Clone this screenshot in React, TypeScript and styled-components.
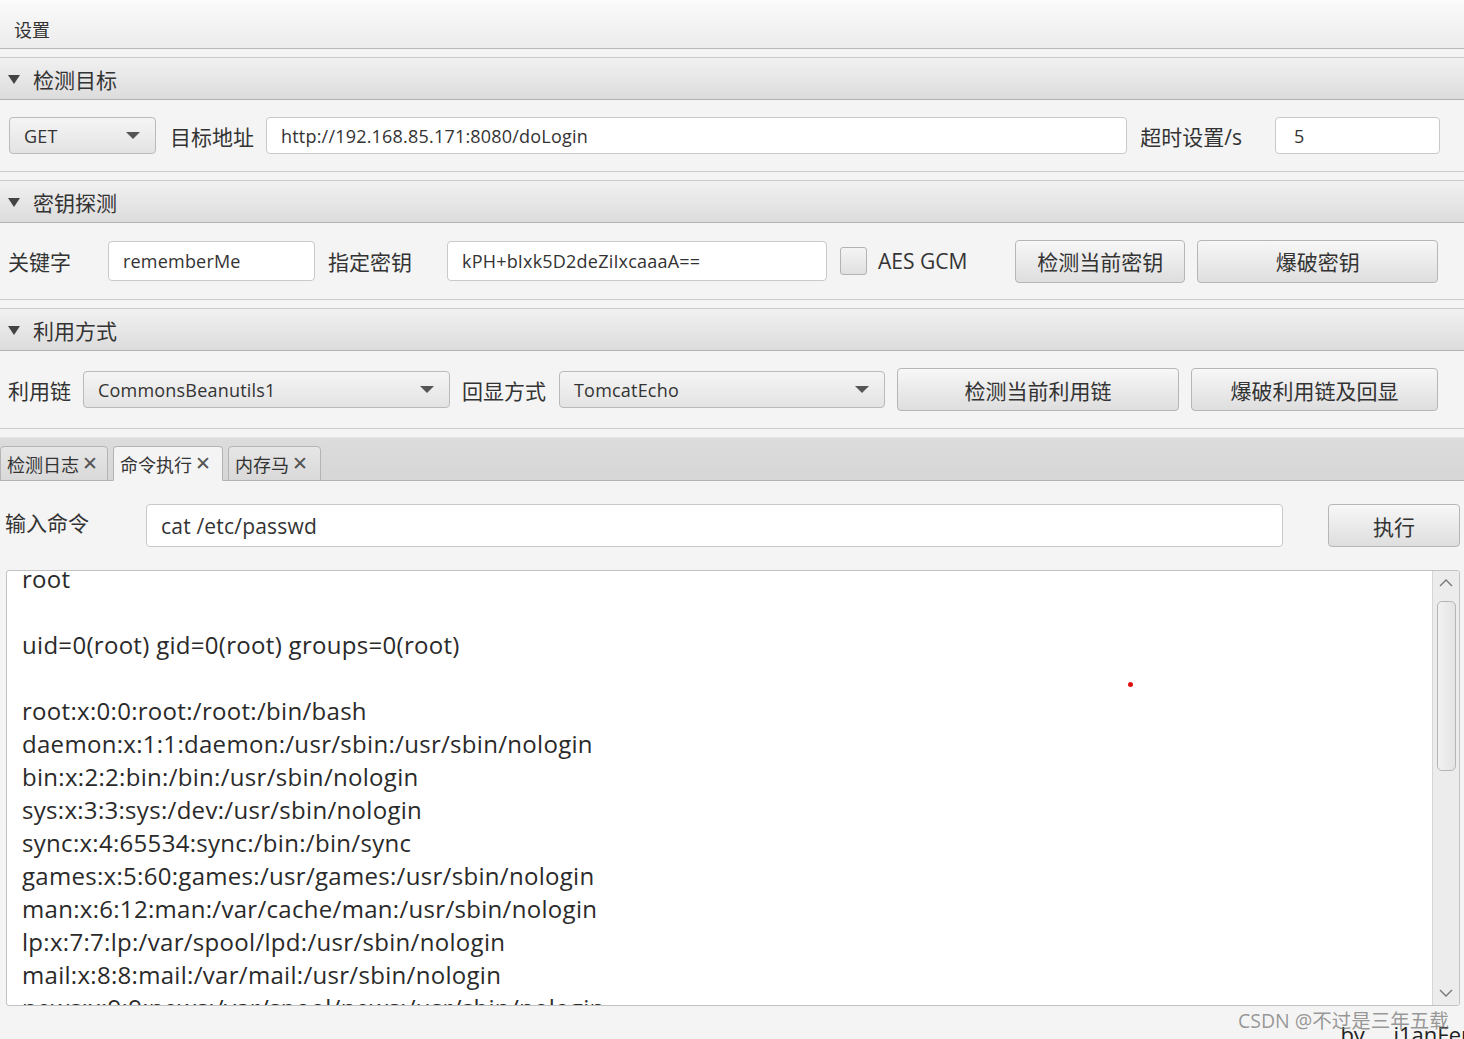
import React from 'react';
import styled, { createGlobalStyle } from 'styled-components';

const GlobalStyle = createGlobalStyle`
  html, body { margin: 0; padding: 0; background: #f4f4f4; }
  body { font-family: "Open Sans", "Noto Sans CJK SC", sans-serif; color: #333; }
  * { box-sizing: border-box; }
`;

const FONT = `"Open Sans", "Noto Sans CJK SC", sans-serif`;

const Window = styled.div`
  position: relative;
  width: 1464px;
  height: 1039px;
  overflow: hidden;
  background: #f4f4f4;
  border-top: 4px solid #fbfbfb;
  display: flex;
  flex-direction: column;
`;

const MenuBar = styled.div`
  height: 45px;
  display: flex;
  align-items: center;
  padding: 6px 0 0 14px;
  font-size: 18px;
  color: #333;
  background: linear-gradient(#f9f9f9, #ececec);
  border-bottom: 1px solid #b9b9b9;
`;

const Sections = styled.div`
  display: flex;
  flex-direction: column;
  gap: 8px;
  padding-top: 8px;
`;

const Pane = styled.section`
  display: flex;
  flex-direction: column;
`;

const PaneHeader = styled.div`
  height: 43px;
  display: flex;
  align-items: center;
  gap: 13px;
  padding-left: 8px;
  font-size: 21px;
  color: #333;
  background: linear-gradient(#f1f1f1, #dcdcdc);
  border-top: 1px solid #cacaca;
  border-bottom: 1px solid #b1b1b1;
`;

const Triangle = styled.span`
  width: 0;
  height: 0;
  border-left: 6px solid transparent;
  border-right: 6px solid transparent;
  border-top: 9px solid #444;
  margin-top: 2px;
`;

const PaneBody = styled.div<{ $h: number }>`
  height: ${(p) => p.$h}px;
  display: flex;
  align-items: center;
  padding-left: 8px;
  border-bottom: 1px solid #cbcbcb;
  background: #f4f4f4;
`;

const Label = styled.span<{ $ml?: number; $size?: number }>`
  margin-left: ${(p) => p.$ml ?? 0}px;
  font-size: ${(p) => p.$size ?? 21}px;
  color: #333;
  white-space: nowrap;
`;

const Field = styled.div<{ $w?: number; $h: number; $ml?: number; $size?: number; $pl?: number }>`
  ${(p) => (p.$w ? `width: ${p.$w}px; flex: none;` : 'flex: 1;')}
  height: ${(p) => p.$h}px;
  margin-left: ${(p) => p.$ml ?? 0}px;
  display: flex;
  align-items: center;
  padding-left: ${(p) => p.$pl ?? 14}px;
  background: #fff;
  border: 1px solid #c9c9c9;
  border-radius: 4px;
  font-size: ${(p) => p.$size ?? 18}px;
  letter-spacing: 0.2px;
  color: #333;
  white-space: nowrap;
  overflow: hidden;
`;

const Combo = styled.div<{ $w: number; $ml?: number }>`
  width: ${(p) => p.$w}px;
  flex: none;
  height: 37px;
  margin-left: ${(p) => p.$ml ?? 0}px;
  display: flex;
  align-items: center;
  justify-content: space-between;
  padding: 0 15px 0 14px;
  background: linear-gradient(#f5f5f5, #e3e3e3);
  border: 1px solid #bababa;
  border-radius: 4px;
  font-size: 18px;
  letter-spacing: 0.2px;
  color: #333;
`;

const ComboArrow = styled.span`
  width: 0;
  height: 0;
  border-left: 7px solid transparent;
  border-right: 7px solid transparent;
  border-top: 7px solid #555;
`;

const Button = styled.div<{ $w: number; $h?: number; $ml?: number }>`
  width: ${(p) => p.$w}px;
  flex: none;
  height: ${(p) => p.$h ?? 43}px;
  margin-left: ${(p) => p.$ml ?? 0}px;
  display: flex;
  align-items: center;
  justify-content: center;
  background: linear-gradient(#f7f7f7, #dedede);
  border: 1px solid #b6b6b6;
  border-radius: 4px;
  font-size: 21px;
  color: #333;
`;

const CheckBox = styled.div<{ $ml?: number }>`
  width: 27px;
  height: 28px;
  margin-left: ${(p) => p.$ml ?? 0}px;
  flex: none;
  background: linear-gradient(#f4f4f4, #e0e0e0);
  border: 1px solid #b3b3b3;
  border-radius: 3px;
`;

const TabPane = styled.div`
  margin-top: 8px;
  flex: 1;
  display: flex;
  flex-direction: column;
`;

const TabBar = styled.div`
  height: 44px;
  display: flex;
  align-items: flex-end;
  gap: 5px;
  background: linear-gradient(#dcdcdc, #d6d6d6);
  border-top: 1px solid #e6e6e6;
  border-bottom: 1px solid #b4b4b4;
`;

const Tab = styled.div<{ $w: number; $active?: boolean }>`
  width: ${(p) => p.$w}px;
  height: 35px;
  margin-bottom: -1px;
  display: flex;
  align-items: center;
  gap: 3px;
  padding-left: 6px;
  font-size: 18px;
  color: #333;
  background: ${(p) => (p.$active ? '#f4f4f4' : 'linear-gradient(#e6e6e6, #d9d9d9)')};
  border: 1px solid #b4b4b4;
  border-bottom: ${(p) => (p.$active ? '1px solid #f4f4f4' : '1px solid #b4b4b4')};
  border-radius: 4px 4px 0 0;
`;

const Close = styled.span`
  font-size: 19px;
  color: #555;
  line-height: 1;
`;

const TabContent = styled.div`
  flex: 1;
  display: flex;
  flex-direction: column;
  padding: 23px 4px 0 6px;
`;

const CommandRow = styled.div`
  display: flex;
  align-items: center;
`;

const CommandLabel = styled.span`
  width: 141px;
  margin-left: -1px;
  margin-top: -8px;
  font-size: 21px;
  color: #333;
`;

const Output = styled.div`
  margin-top: 23px;
  height: 436px;
  display: flex;
  background: #fff;
  border: 1px solid #c2c2c2;
  border-radius: 3px;
  overflow: hidden;
`;

const OutputText = styled.div`
  flex: 1;
  padding-left: 15px;
  overflow: hidden;
`;

const OutputLines = styled.pre`
  margin: -9px 0 0 0;
  font-family: ${FONT};
  font-size: 24px;
  letter-spacing: 0.3px;
  line-height: 33px;
  color: #2a2a2a;
`;

const ScrollBar = styled.div`
  width: 27px;
  flex: none;
  display: flex;
  flex-direction: column;
  align-items: center;
  background: #ececec;
  border-left: 1px solid #d6d6d6;
`;

const ScrollArrow = styled.div`
  height: 24px;
  display: flex;
  align-items: center;
  justify-content: center;
`;

const Thumb = styled.div`
  width: 19px;
  height: 170px;
  margin-top: 6px;
  background: linear-gradient(90deg, #f2f2f2, #e3e3e3);
  border: 1px solid #b5b5b5;
  border-radius: 5px;
`;

const ScrollSpace = styled.div`
  flex: 1;
`;

const Footer = styled.div`
  flex: 1;
  display: flex;
  justify-content: flex-end;
  align-items: flex-end;
  margin-right: -10px;
`;

const Credit = styled.span`
  font-size: 22px;
  color: #222;
  white-space: pre;
  margin-bottom: -10px;
`;

const Watermark = styled.div`
  position: absolute;
  left: 1238px;
  top: 1001px;
  font-family: ${FONT};
  font-size: 19.5px;
  color: rgba(120, 120, 120, 0.75);
  white-space: nowrap;
`;

const RedDot = styled.div`
  position: absolute;
  left: 1128px;
  top: 678px;
  width: 5px;
  height: 5px;
  border-radius: 50%;
  background: #e01010;
`;

const lines = [
  'root',
  '',
  'uid=0(root) gid=0(root) groups=0(root)',
  '',
  'root:x:0:0:root:/root:/bin/bash',
  'daemon:x:1:1:daemon:/usr/sbin:/usr/sbin/nologin',
  'bin:x:2:2:bin:/bin:/usr/sbin/nologin',
  'sys:x:3:3:sys:/dev:/usr/sbin/nologin',
  'sync:x:4:65534:sync:/bin:/bin/sync',
  'games:x:5:60:games:/usr/games:/usr/sbin/nologin',
  'man:x:6:12:man:/var/cache/man:/usr/sbin/nologin',
  'lp:x:7:7:lp:/var/spool/lpd:/usr/sbin/nologin',
  'mail:x:8:8:mail:/var/mail:/usr/sbin/nologin',
  'news:x:9:9:news:/var/spool/news:/usr/sbin/nologin',
];

const Chevron = ({ up }: { up?: boolean }) => (
  <svg width="16" height="10" viewBox="0 0 16 10">
    <path
      d={up ? 'M2 8 L8 2 L14 8' : 'M2 2 L8 8 L14 2'}
      fill="none"
      stroke="#777"
      strokeWidth="1.4"
    />
  </svg>
);

export default function App() {
  return (
    <>
      <GlobalStyle />
      <Window>
        <MenuBar>设置</MenuBar>
        <Sections>
          <Pane>
            <PaneHeader>
              <Triangle />
              检测目标
            </PaneHeader>
            <PaneBody $h={72}>
              <Combo $w={147} $ml={1}>
                GET
                <ComboArrow />
              </Combo>
              <Label $ml={14}>目标地址</Label>
              <Field $h={37} $ml={12}>http://192.168.85.171:8080/doLogin</Field>
              <Label $ml={13}>超时设置/s</Label>
              <Field $w={165} $h={37} $ml={33} $pl={18}>5</Field>
              <Label $ml={24} />
            </PaneBody>
          </Pane>
          <Pane>
            <PaneHeader>
              <Triangle />
              密钥探测
            </PaneHeader>
            <PaneBody $h={77}>
              <Label>关键字</Label>
              <Field $w={207} $h={40} $ml={37}>rememberMe</Field>
              <Label $ml={13}>指定密钥</Label>
              <Field $w={380} $h={40} $ml={35}>kPH+bIxk5D2deZiIxcaaaA==</Field>
              <CheckBox $ml={13} />
              <Label $ml={11}>AES GCM</Label>
              <Button $w={170} $ml={48}>检测当前密钥</Button>
              <Button $w={241} $ml={12}>爆破密钥</Button>
            </PaneBody>
          </Pane>
          <Pane>
            <PaneHeader>
              <Triangle />
              利用方式
            </PaneHeader>
            <PaneBody $h={78}>
              <Label>利用链</Label>
              <Combo $w={367} $ml={12}>
                CommonsBeanutils1
                <ComboArrow />
              </Combo>
              <Label $ml={12}>回显方式</Label>
              <Combo $w={326} $ml={13}>
                TomcatEcho
                <ComboArrow />
              </Combo>
              <Button $w={282} $ml={12}>检测当前利用链</Button>
              <Button $w={247} $ml={12}>爆破利用链及回显</Button>
            </PaneBody>
          </Pane>
        </Sections>
        <TabPane>
          <TabBar>
            <Tab $w={108}>
              检测日志<Close>✕</Close>
            </Tab>
            <Tab $w={110} $active>
              命令执行<Close>✕</Close>
            </Tab>
            <Tab $w={93}>
              内存马<Close>✕</Close>
            </Tab>
          </TabBar>
          <TabContent>
            <CommandRow>
              <CommandLabel>输入命令</CommandLabel>
              <Field $h={43} $size={21}>cat /etc/passwd</Field>
              <Button $w={132} $ml={45}>执行</Button>
            </CommandRow>
            <Output>
              <OutputText>
                <OutputLines>{lines.join('\n')}</OutputLines>
              </OutputText>
              <ScrollBar>
                <ScrollArrow>
                  <Chevron up />
                </ScrollArrow>
                <Thumb />
                <ScrollSpace />
                <ScrollArrow>
                  <Chevron />
                </ScrollArrow>
              </ScrollBar>
            </Output>
            <Footer>
              <Credit>{'by     i1anFer'}</Credit>
            </Footer>
          </TabContent>
        </TabPane>
        <Watermark>CSDN @不过是三年五载</Watermark>
        <RedDot />
      </Window>
    </>
  );
}
